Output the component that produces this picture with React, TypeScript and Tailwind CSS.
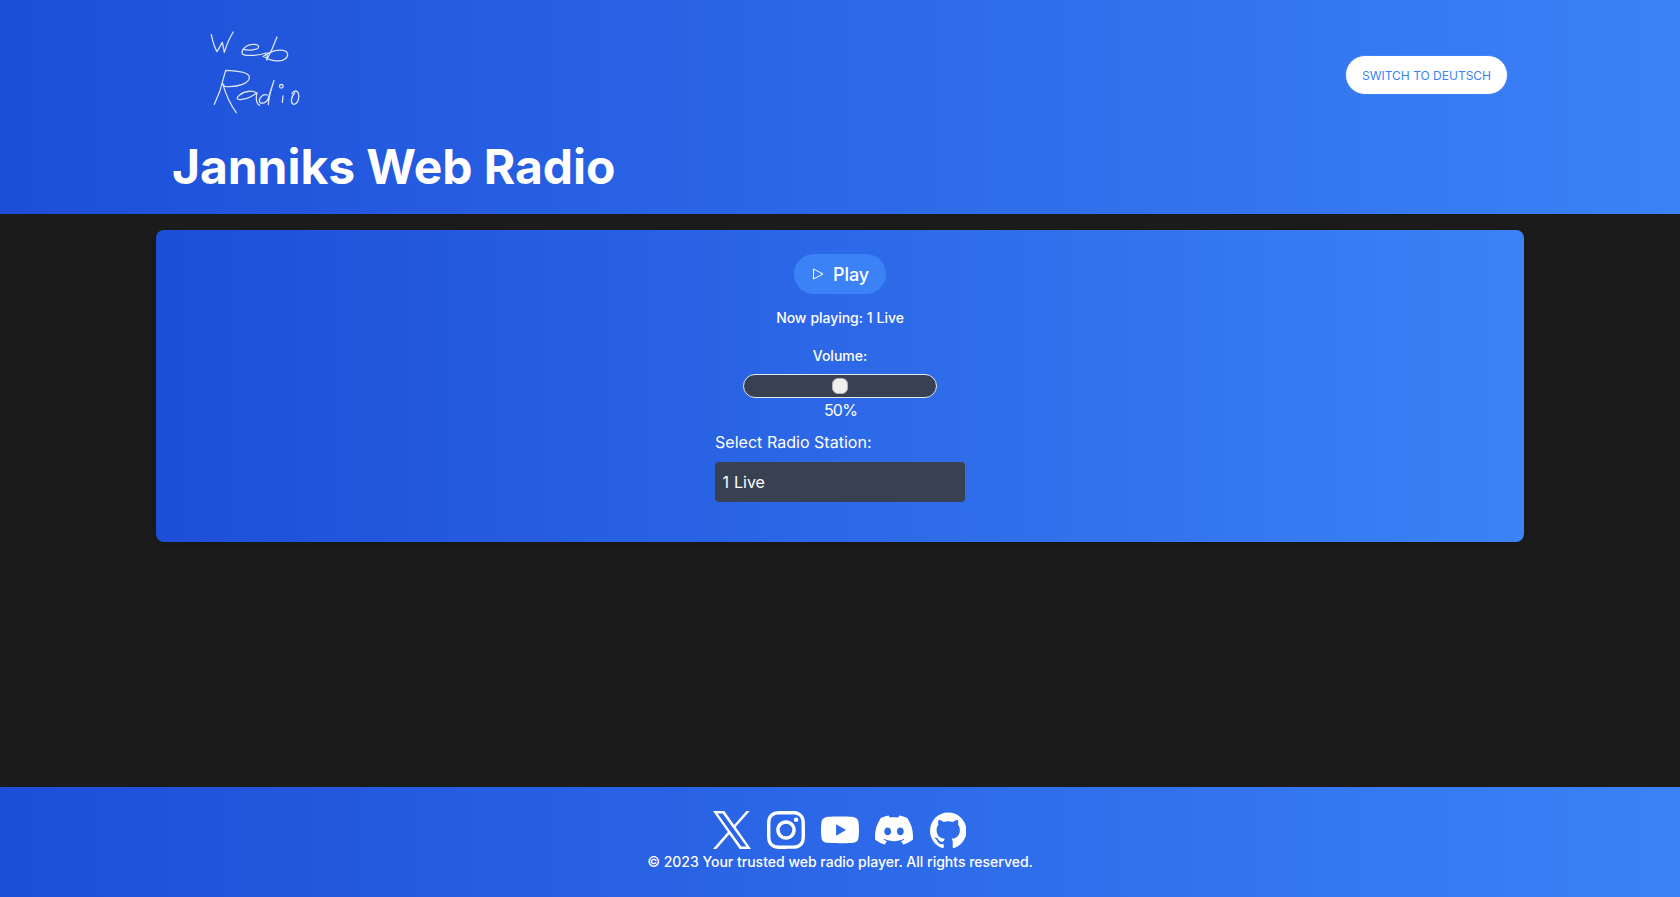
import { SiDiscord, SiGithub, SiInstagram, SiYoutube } from "react-icons/si";

const gradient = "bg-[linear-gradient(90deg,#1d4ed8,#3b82f6)]";

function Logo() {
  return (
    <svg viewBox="0 0 390 330" className="ml-[18px] h-[110px] w-[130px]" fill="none" stroke="#fff" strokeOpacity="0.85" strokeWidth="3.8" strokeLinecap="round" strokeLinejoin="round">
      <path d="M64 56C68 76 74 95 81 107L97 79L103 109C110 86 118 66 130 48" />
      <path d="M161 100C176 104 205 102 206 93C206 83 180 83 170 90C158 98 155 108 157 114C166 121 206 119 228 111" />
      <path d="M261 63C252 87 242 110 230 132L232 112M219 122C238 107 267 97 286 105C298 113 294 128 276 133C258 137 239 133 225 124" />
      <path d="M73 265L90 224L107 163C138 164 174 168 178 182C180 201 146 215 104 211L98 203C108 238 121 266 139 290" />
      <path d="M200 234C194 221 165 224 149 237C137 247 140 253 156 250C175 247 190 239 201 230C197 248 200 263 209 268" />
      <path d="M232 237C222 232 209 242 208 254C209 267 230 263 235 246L252 193C244 220 235 244 235 266" />
      <circle cx="274" cy="211" r="5.5" />
      <path d="M279 240L277 259M306 233C310 225 319 222 324 229C331 244 323 264 312 265C300 263 303 242 314 231" />
    </svg>
  );
}

function XLogo() {
  return (
    <svg viewBox="0 0 1200 1227" preserveAspectRatio="none" className="size-[38px]" fill="currentColor">
      <path d="M714.163 519.284L1160.89 0H1055.03L667.137 450.887L357.328 0H0L468.492 681.821L0 1226.37H105.866L515.491 750.218L842.672 1226.37H1200L714.137 519.284H714.163ZM569.165 687.828L521.697 619.934L144.011 79.6944H306.615L611.412 515.685L658.88 583.579L1055.08 1150.3H892.476L569.165 687.854V687.828Z" />
    </svg>
  );
}

export default function App() {
  return (
    <div className="flex h-[897px] flex-col bg-[#1b1b1b] font-['Inter',sans-serif] text-white">
      <header className={`h-[214px] shrink-0 ${gradient}`}>
        <div className="mx-auto w-[1368px] px-4 pt-4">
          <div className="flex items-start justify-between">
            <Logo />
            <button className="mt-[39px] h-10 w-[163px] rounded-full border border-[#3b82f6] bg-white pt-0.5 text-xs text-[#3b82f6]">
              SWITCH TO DEUTSCH
            </button>
          </div>
          <h1 className="mt-[17px] text-5xl leading-[48px] font-bold tracking-[-0.06px]">Janniks Web Radio</h1>
        </div>
      </header>

      <main className="flex-1 pt-4">
        <section className={`mx-auto flex h-[312px] w-[1368px] flex-col items-center rounded-lg pt-6 shadow-md ${gradient}`}>
          <button className="flex h-10 w-[92px] items-center rounded-full bg-[#3b82f6] pl-[19px] text-lg font-medium tracking-[-0.1px]">
            <svg viewBox="0 0 11 12" className="mr-[9px] h-3 w-[11px]" fill="none" stroke="currentColor">
              <path d="M.5 1V11L10 6Z" strokeLinejoin="round" />
            </svg>
            <span className="pt-0.5">Play</span>
          </button>
          <p className="mt-[14px] text-sm leading-5 font-medium tracking-[-0.05px] [word-spacing:0.3px]">Now playing: 1 Live</p>
          <label className="mt-[18px] text-sm leading-5 font-medium">Volume:</label>
          <div className="mt-2 flex h-6 w-[194px] items-center justify-center rounded-full border border-[#e5e7eb] bg-[#374151]">
            <div className="size-4 rounded-[6px] border border-[#b2b2b2] bg-[#efefef]" />
          </div>
          <div className="pl-px text-base leading-6 tracking-[-0.8px]">50%</div>
          <div className="mt-2 w-[250px]">
            <label className="block text-base leading-6 tracking-[0.03px]">Select Radio Station:</label>
            <div className="mt-2 flex h-10 items-center rounded bg-[#374151] px-[7.5px] [word-spacing:0.5px]">1 Live</div>
          </div>
        </section>
      </main>

      <footer className={`flex h-[110px] shrink-0 flex-col items-center pt-6 ${gradient}`}>
        <div className="flex items-center gap-4">
          <XLogo />
          <SiInstagram className="size-[38px]" />
          <SiYoutube className="size-[38px]" />
          <SiDiscord className="size-[38px]" />
          <div className="flex size-[38px] items-center justify-center">
            <SiGithub className="size-[36.5px]" />
          </div>
        </div>
        <p className="mt-[3px] text-sm leading-5 font-medium">© 2023 Your trusted web radio player. All rights reserved.</p>
      </footer>
    </div>
  );
}
